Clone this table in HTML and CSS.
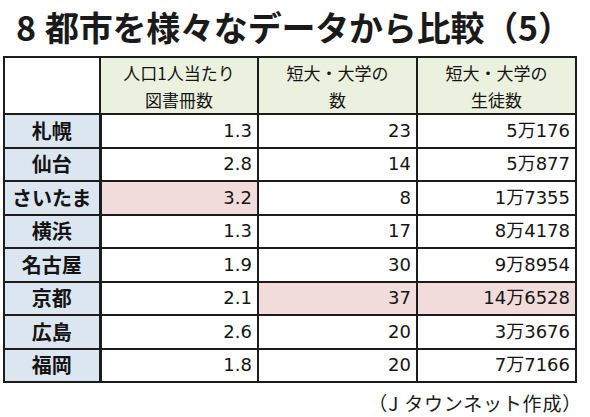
FILE: index.html
```html
<!DOCTYPE html>
<html lang="ja">
<head>
<meta charset="utf-8">
<link rel="stylesheet" href="styles.css">
</head>
<body>
<div class="page">
  <h1 class="title"><span class="title-num">8</span>都市を様々なデータから比較（5）</h1>
  <table class="data">
    <colgroup>
      <col class="c-city">
      <col class="c-books">
      <col class="c-colleges">
      <col class="c-students">
    </colgroup>
    <thead>
      <tr class="head-row">
        <th class="corner"></th>
        <th>人口1人当たり<br>図書冊数</th>
        <th>短大・大学の<br>数</th>
        <th>短大・大学の<br>生徒数</th>
      </tr>
    </thead>
    <tbody>
      <tr><th class="city">札幌</th><td>1.3</td><td>23</td><td>5万176</td></tr>
      <tr><th class="city">仙台</th><td>2.8</td><td>14</td><td>5万877</td></tr>
      <tr><th class="city">さいたま</th><td class="hl">3.2</td><td>8</td><td>1万7355</td></tr>
      <tr><th class="city">横浜</th><td>1.3</td><td>17</td><td>8万4178</td></tr>
      <tr><th class="city">名古屋</th><td>1.9</td><td>30</td><td>9万8954</td></tr>
      <tr><th class="city">京都</th><td>2.1</td><td class="hl">37</td><td class="hl">14万6528</td></tr>
      <tr><th class="city">広島</th><td>2.6</td><td>20</td><td>3万3676</td></tr>
      <tr><th class="city">福岡</th><td>1.8</td><td>20</td><td>7万7166</td></tr>
    </tbody>
  </table>
  <p class="credit">（J タウンネット作成）</p>
</div>
</body>
</html>
```

FILE: styles.css
```css
html, body {
  margin: 0;
  padding: 0;
  background: #ffffff;
}

.page {
  width: 590px;
  height: 417px;
  overflow: hidden;
  color: #141414;
  font-family: "Noto Sans CJK JP", "Noto Sans", sans-serif;
}

.title {
  margin: 0 0 12px 0;
  padding: 10px 0 0 16px;
  font-size: 34px;
  line-height: 34px;
  font-weight: 700;
  color: #1a1a1a;
  white-space: nowrap;
  letter-spacing: -0.2px;
}

.title-num {
  margin-right: 9px;
}

.data {
  margin-left: 3px;
  width: 572px;
  border-collapse: collapse;
  table-layout: fixed;
  border: 2px solid #151515;
}

.c-city { width: 96px; }
.c-books { width: 158px; }
.c-colleges { width: 159px; }
.c-students { width: 159px; }

.data th,
.data td {
  border: 2px solid #1c1c1c;
  padding: 0;
}

.head-row {
  height: 57px;
}

.head-row th {
  background: #ebf1de;
  font-weight: 400;
  font-size: 17px;
  line-height: 27px;
  text-align: center;
  vertical-align: middle;
}

.head-row th.corner {
  background: #ffffff;
}

.data tbody tr {
  height: 33.5px;
}

.data th.city {
  background: #dce6f1;
  font-size: 20px;
  font-weight: 700;
  text-align: center;
  border-right-width: 3px;
  line-height: 24px;
}

.data td {
  text-align: right;
  padding-right: 5px;
  font-family: "DejaVu Sans", "Noto Sans CJK JP", sans-serif;
  font-size: 18px;
  line-height: 24px;
  background: #ffffff;
}

.data td.hl {
  background: #f2dcdb;
}

.credit {
  margin: 10px 8px 0 0;
  text-align: right;
  font-size: 19px;
  line-height: 20px;
  letter-spacing: 0.8px;
  color: #1a1a1a;
}
```
